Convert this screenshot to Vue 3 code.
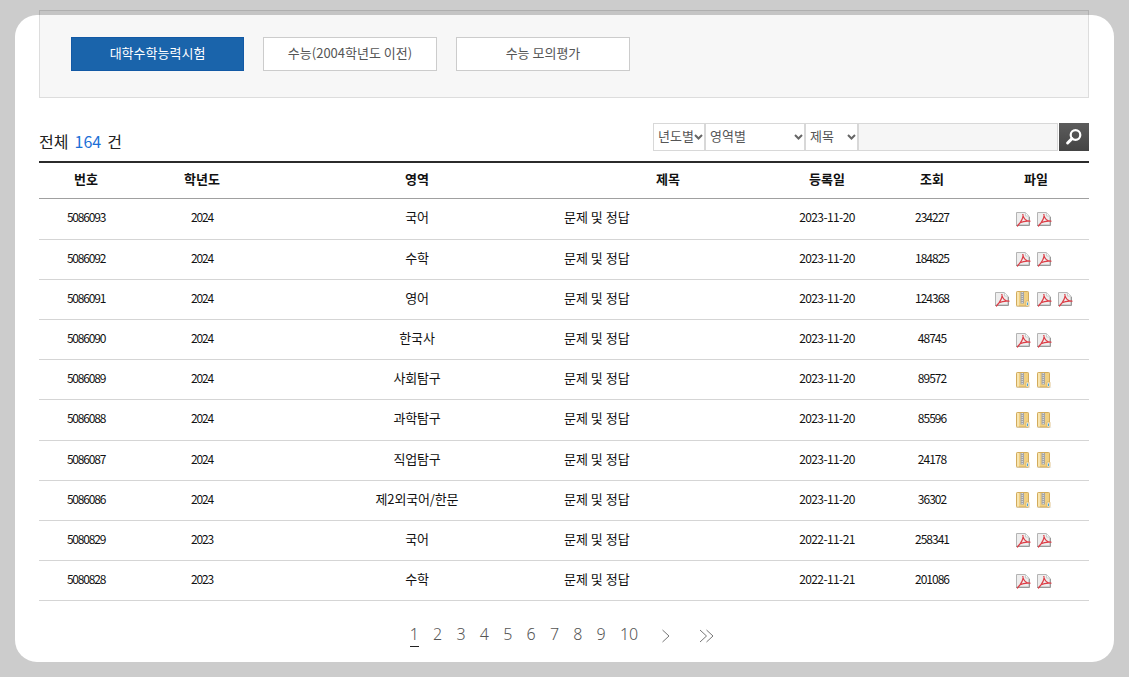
<script setup>
import { ref } from 'vue'

const tabs = ['대학수학능력시험', '수능(2004학년도 이전)', '수능 모의평가']
const activeTab = ref(0)

const rows = [
  { id: 5086093, year: 2024, area: '국어', date: '2023-11-20', views: 234227, files: ['pdf', 'pdf'] },
  { id: 5086092, year: 2024, area: '수학', date: '2023-11-20', views: 184825, files: ['pdf', 'pdf'] },
  { id: 5086091, year: 2024, area: '영어', date: '2023-11-20', views: 124368, files: ['pdf', 'zip', 'pdf', 'pdf'] },
  { id: 5086090, year: 2024, area: '한국사', date: '2023-11-20', views: 48745, files: ['pdf', 'pdf'] },
  { id: 5086089, year: 2024, area: '사회탐구', date: '2023-11-20', views: 89572, files: ['zip', 'zip'] },
  { id: 5086088, year: 2024, area: '과학탐구', date: '2023-11-20', views: 85596, files: ['zip', 'zip'] },
  { id: 5086087, year: 2024, area: '직업탐구', date: '2023-11-20', views: 24178, files: ['zip', 'zip'] },
  { id: 5086086, year: 2024, area: '제2외국어/한문', date: '2023-11-20', views: 36302, files: ['zip', 'zip'] },
  { id: 5080829, year: 2023, area: '국어', date: '2022-11-21', views: 258341, files: ['pdf', 'pdf'] },
  { id: 5080828, year: 2023, area: '수학', date: '2022-11-21', views: 201086, files: ['pdf', 'pdf'] }
]

const pages = [1, 2, 3, 4, 5, 6, 7, 8, 9, 10]
</script>

<template>
  <div class="page">
    <div class="card">
      <div class="tab-box">
        <a
          v-for="(tab, i) in tabs"
          :key="tab"
          :class="['tab', { active: i === activeTab }]"
          href="#"
          @click.prevent="activeTab = i"
        >{{ tab }}</a>
      </div>

      <div class="toolbar">
        <p class="total">전체 <b>164</b> 건</p>
        <form class="search" @submit.prevent>
          <select class="sel-year"><option>년도별</option></select>
          <select class="sel-area"><option>영역별</option></select>
          <select class="sel-field"><option>제목</option></select>
          <input class="keyword" type="text">
          <button class="search-btn" type="submit" aria-label="검색">
            <svg width="20" height="20" viewBox="0 0 20 20">
              <circle cx="11.500" cy="8" r="4.800" fill="none" stroke="#fff" stroke-width="2.200" />
              <path d="M8 11.600 3.600 16" stroke="#fff" stroke-width="3" stroke-linecap="round" />
            </svg>
          </button>
        </form>
      </div>

      <table class="board">
        <colgroup>
          <col style="width: 94px">
          <col style="width: 138px">
          <col style="width: 292px">
          <col style="width: 210px">
          <col style="width: 108px">
          <col style="width: 102px">
          <col style="width: 106px">
        </colgroup>
        <thead>
          <tr>
            <th>번호</th>
            <th>학년도</th>
            <th>영역</th>
            <th>제목</th>
            <th>등록일</th>
            <th>조회</th>
            <th>파일</th>
          </tr>
        </thead>
        <tbody>
          <tr v-for="row in rows" :key="row.id">
            <td class="num">{{ row.id }}</td>
            <td class="num">{{ row.year }}</td>
            <td class="area">{{ row.area }}</td>
            <td class="title">문제 및 정답</td>
            <td class="date">{{ row.date }}</td>
            <td class="num views">{{ row.views }}</td>
            <td class="files">
              <template v-for="(file, i) in row.files" :key="i">
                <svg v-if="file === 'pdf'" class="file-icon" width="16" height="16" viewBox="0 0 16 16">
                  <path d="M1.500 1.500h9l3.500 3.500v9h-12.500z" fill="#eee" stroke="#b4b4b4" />
                  <path d="M1 14.500h13.500M14.500 6v8.500" stroke="#999" />
                  <path d="M10.500 1.500v3.500h3.500z" fill="#fbfbfb" stroke="#ccc" />
                  <path d="M8 3.500c.4 3-1.500 7-5.500 11.500M7.800 3.500c.5 3 2.700 6.500 7.200 6.700M5 11.800c3-1.600 6.500-2 10-1.600"
                    fill="none" stroke="#dc3f48" stroke-width="1.200" stroke-linecap="round" />
                </svg>
                <svg v-else class="file-icon" width="16" height="16" viewBox="0 0 16 16">
                  <ellipse cx="8" cy="15.200" rx="7.500" ry=".8" fill="#d8d8d8" />
                  <rect x="1.500" y="0.500" width="12" height="14.500" rx=".8" fill="#f1d082" stroke="#d2ab5c" />
                  <rect x="2" y="1" width="2" height="13.500" fill="#f8e5b0" />
                  <rect x="5.500" y="1" width="3.500" height="11.500" fill="#a5a5a5" />
                  <path d="M7.200 1v11" stroke="#ececec" stroke-dasharray="1 1" />
                  <rect x="11" y="10" width="3" height="5" rx=".5" fill="#fff6dc" stroke="#d2ab5c" stroke-width=".7" />
                  <rect x="12" y="11.500" width="1" height="2.500" fill="#3fa4e0" />
                </svg>
              </template>
            </td>
          </tr>
        </tbody>
      </table>

      <nav class="pager">
        <a v-for="p in pages" :key="p" :class="['page-num', { current: p === 1 }]" href="#" @click.prevent>{{ p }}</a>
        <a class="arrow next" href="#" aria-label="다음" @click.prevent>
          <svg width="10" height="14" viewBox="0 0 10 14">
            <path d="M1.500 1 8 7l-6.500 6" fill="none" stroke="#777" />
          </svg>
        </a>
        <a class="arrow last" href="#" aria-label="마지막" @click.prevent>
          <svg width="16" height="14" viewBox="0 0 16 14">
            <path d="M1 1l6.500 6L1 13M7.500 1 14 7l-6.500 6" fill="none" stroke="#777" />
          </svg>
        </a>
      </nav>
    </div>
  </div>
</template>

<style>
html, body {
  margin: 0;
  background: #ccc;
}
</style>

<style scoped>
.page {
  box-sizing: border-box;
  height: 677px;
  padding: 15px;
  overflow: hidden;
  background: #ccc;
  font-family: "Noto Sans CJK KR", "Noto Sans", sans-serif;
  color: #222;
}

.card {
  display: flow-root;
  box-sizing: border-box;
  width: 1099px;
  height: 647px;
  padding: 0 25px 0 24px;
  background: #fff;
  border-radius: 22px;
}

.tab-box {
  display: flex;
  gap: 19px;
  box-sizing: border-box;
  height: 88px;
  margin-top: -5px;
  padding: 26px 31px;
  background: rgba(0, 0, 0, 0.03);
  border: 1px solid rgba(0, 0, 0, 0.1);
}

.tab {
  box-sizing: border-box;
  width: 174px;
  height: 34px;
  line-height: 30px;
  text-align: center;
  font-size: 13px;
  color: #555;
  text-decoration: none;
  background: #fff;
  border: 1px solid #ccc;
}

.tab.active {
  width: 173px;
  color: #fff;
  background: #1a64ab;
  border-color: #1259a5;
}

.toolbar {
  display: flex;
  justify-content: space-between;
  align-items: center;
  height: 28px;
  margin-top: 25px;
}

.total {
  margin: 8px 0 0;
  font-size: 16px;
  font-weight: 400;
  word-spacing: 2.500px;
  color: #222;
}

.total b {
  font-weight: 400;
  color: #1b6fd6;
}

.search {
  display: flex;
  height: 28px;
}

.search select,
.keyword {
  box-sizing: border-box;
  height: 28px;
  margin: 0;
  border: 1px solid #d8d8d8;
  border-radius: 0;
  font-family: inherit;
  font-size: 13px;
  color: #555;
  background: #fff;
}

.search select {
  appearance: none;
  padding: 0 0 3px 4px;
  background: #fff url("data:image/svg+xml,%3Csvg xmlns='http://www.w3.org/2000/svg' width='9' height='6'%3E%3Cpath d='M1 1l3.500 3.500L8 1' fill='none' stroke='%23666' stroke-width='2'/%3E%3C/svg%3E") no-repeat right 1px center;
}

.sel-year { width: 52px; }
.sel-area { width: 100px; }
.sel-field { width: 53px; }

.keyword {
  width: 200px;
  background: #f6f6f6;
}

.search-btn {
  display: flex;
  align-items: center;
  justify-content: center;
  width: 30px;
  height: 28px;
  margin-left: 1px;
  padding: 0;
  border: 0;
  background: linear-gradient(#5c5c5c, #444);
}

.board {
  width: 1050px;
  margin-top: 10px;
  table-layout: fixed;
  border-collapse: separate;
  border-spacing: 0;
  border-top: 2px solid #2b2b2b;
  font-size: 13px;
}

.board th {
  box-sizing: border-box;
  height: 36.400px;
  padding: 0 0 4px;
  font-size: 13px;
  font-weight: 700;
  color: #111;
  border-bottom: 1px solid #a0a0a0;
}

.board td {
  box-sizing: border-box;
  height: 40.200px;
  padding: 0 0 4px;
  text-align: center;
  color: #111;
  border-bottom: 1px solid #d5d5d5;
}

.board td.area {
  letter-spacing: -0.150px;
}

.board td.num {
  font-size: 12px;
  letter-spacing: -1.200px;
}

.board td.views {
  letter-spacing: -1px;
}

.board td.date {
  font-size: 12px;
  letter-spacing: -0.600px;
}

.board td.title {
  padding-left: 1px;
  text-align: left;
}

.board td.files {
  padding: 0 10px 0 0;
  font-size: 0;
}

.file-icon {
  margin-left: 5px;
  vertical-align: middle;
}

.pager {
  display: flex;
  align-items: center;
  justify-content: center;
  height: 24px;
  margin-top: 21px;
  padding-right: 10.500px;
  font-family: "Noto Sans", sans-serif;
  font-size: 16px;
  font-weight: 300;
}

.page-num {
  position: relative;
  margin: 0 7.120px;
  color: #555;
  text-decoration: none;
}

.page-num.current::after {
  content: "";
  position: absolute;
  left: 0;
  right: 0;
  bottom: -2px;
  height: 1px;
  background: #222;
}

.arrow {
  display: flex;
  margin-top: 4px;
}

.arrow.next {
  margin-left: 15.500px;
}

.arrow.last {
  margin-left: 28px;
}
</style>
